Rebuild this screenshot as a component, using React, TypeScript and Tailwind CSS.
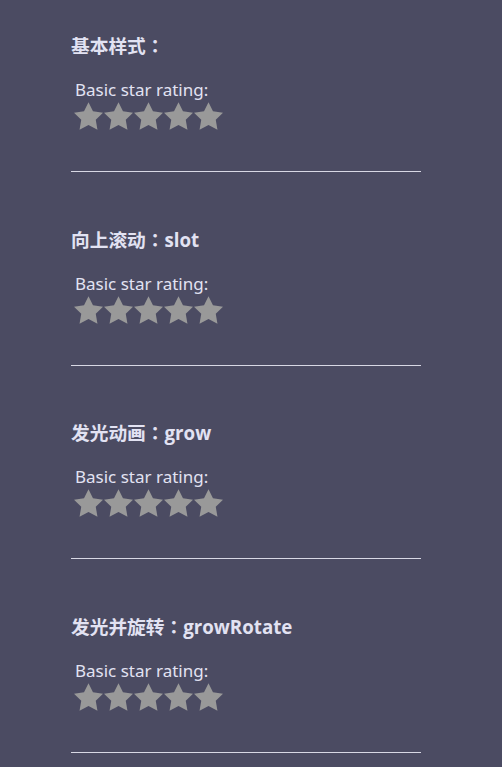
import React from "react"

const sections = [
  { id: "basic", title: "基本样式：" },
  { id: "slot", title: "向上滚动：slot" },
  { id: "grow", title: "发光动画：grow" },
  { id: "growRotate", title: "发光并旋转：growRotate" },
]

function Star() {
  return (
    <svg width="29" height="28" viewBox="2 2 20 19.1" className="block">
      <path
        d="M12 2l3.09 6.26L22 9.27l-5 4.87 1.18 6.88L12 17.77l-6.18 3.25L7 14.14 2 9.27l6.91-1.01L12 2z"
        fill="#999999"
      />
    </svg>
  )
}

function StarRating() {
  return (
    <div className="flex gap-[1px] pl-[3px]">
      {[0, 1, 2, 3, 4].map((i) => (
        <Star key={i} />
      ))}
    </div>
  )
}

export default function App() {
  return (
    <div className="min-h-screen w-full bg-[#4b4b62] pl-[71px] pt-[35px] text-[#e2e2f2]">
      {sections.map((s) => (
        <div key={s.id} className="w-[350px]">
          <h3
            className="h-[22px] text-[18.72px] font-bold leading-[22px]"
            style={{ fontFamily: '"Open Sans", "Noto Sans CJK TC", "Noto Sans CJK SC", sans-serif' }}
          >
            {s.title}
          </h3>
          <p
            className="mt-[23px] h-[20px] pl-[4px] text-[17px] leading-[20px]"
            style={{ fontFamily: '"Noto Sans", sans-serif' }}
          >
            Basic star rating:
          </p>
          <div className="mt-[2px]">
            <StarRating />
          </div>
          <div className="mt-[41px] mb-[56.67px] h-px w-[350px] bg-[#d8d8e4]" />
        </div>
      ))}
    </div>
  )
}
